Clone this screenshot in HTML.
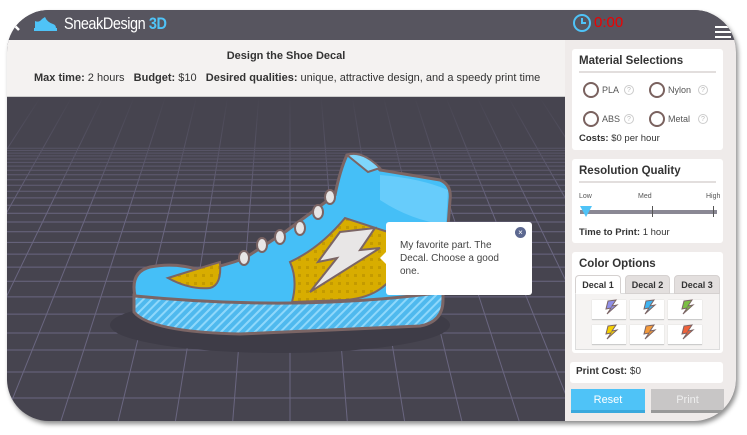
<!DOCTYPE html>
<html><head><meta charset="utf-8"><style>
*{box-sizing:border-box;margin:0;padding:0}
body{width:747px;height:435px;background:#fff;font-family:"Liberation Sans",sans-serif;position:relative;overflow:hidden}
#frame{position:absolute;left:7px;top:10px;width:729px;height:411px;border-radius:42px;overflow:hidden;background:#46444f;box-shadow:2px 3px 5px rgba(0,0,0,.45)}
#hdr{position:absolute;left:0;top:0;width:729px;height:30px;background:#57555f}
#info{position:absolute;left:0;top:30px;width:558px;height:57px;background:#f4f2f1;border-bottom:1px solid #ccc;font-size:11px;color:#333;text-align:center}
#side{position:absolute;left:558px;top:30px;width:171px;height:381px;background:#efebea}
.card{position:absolute;left:7px;width:151px;background:#fff;border-radius:3px}
.ttl{font-weight:bold;font-size:11.5px;color:#333;margin:6px 7px 0;padding-bottom:4px;border-bottom:2px solid #e2dedd}
.rad{position:absolute;width:16px;height:16px;border:2px solid #7a625f;border-radius:50%}
.lbl{position:absolute;font-size:9px;color:#555}
.q{position:absolute;width:10px;height:10px;border:1px solid #ccc;border-radius:50%;font-size:7px;color:#bbb;text-align:center;line-height:9px}
.sw{position:absolute;width:34px;height:20px;background:#fff;border-bottom:1px solid #ccc;box-shadow:0 0 1px #ccc}
.tab{position:absolute;top:23px;height:19px;font-size:9px;font-weight:bold;color:#333;text-align:center;line-height:18px;border-radius:4px 4px 0 0;background:#e3dfde;border:1px solid #d5d1d0}
</style></head><body>
<div id="frame">
<svg style="position:absolute;left:0;top:87px" width="558" height="324" viewBox="0 87 558 324">
<defs><linearGradient id="fd" x1="0" y1="0" x2="0" y2="1"><stop offset="0" stop-color="#46444f"/><stop offset=".35" stop-color="#46444f" stop-opacity="0"/></linearGradient></defs>
<g stroke="#6a6680" stroke-width="1" fill="none" id="grid"></g>
<rect x="0" y="87" width="558" height="324" fill="url(#fd)"/>
</svg>
<div id="hdr">
<svg style="position:absolute;left:3px;top:7px" width="12" height="14"><path d="M9 1 L3 7 L9 13" stroke="#fff" stroke-width="2.5" fill="none"/></svg>
<svg style="position:absolute;left:26px;top:6px" width="24" height="16"><path d="M2 12 L2 5 Q6 7 9 3 L12 1 Q14 6 20 8 Q23 9 23 12 Z" fill="#4fc3f7"/><rect x="1" y="12" width="23" height="3" fill="#4fc3f7"/></svg>
<div style="position:absolute;left:57px;top:4px;font-size:17px;color:#fff;letter-spacing:-.5px;transform:scaleX(.85);transform-origin:left">SneakDesign <b style="color:#4fc3f7">3D</b></div>
</div>
<div id="info">
<div style="font-weight:bold;margin-top:10px">Design the Shoe Decal</div>
<div style="margin-top:10px;text-align:left;padding-left:27px;white-space:nowrap"><b>Max time:</b> 2 hours &nbsp;&nbsp;<b>Budget:</b> $10 &nbsp;&nbsp;<b>Desired qualities:</b> unique, attractive design, and a speedy print time</div>
</div>
<!-- shoe in frame coords (page - 7,10) -->
<svg style="position:absolute;left:0;top:0" width="558" height="411" viewBox="7 10 558 411">
<defs><pattern id="st" width="6" height="6" patternUnits="userSpaceOnUse" patternTransform="rotate(45)"><rect width="6" height="6" fill="#4fb9ee"/><rect width="2" height="6" fill="#8fd8fb"/></pattern>
<pattern id="dt" width="8" height="8" patternUnits="userSpaceOnUse"><rect width="8" height="8" fill="#d8ad00"/><rect x="2" y="2" width="3" height="3" fill="#c39a00"/></pattern></defs>
<ellipse cx="280" cy="325" rx="170" ry="28" fill="#3e3c47"/>
<path d="M134 295 L134 312 Q150 332 240 334 L420 326 Q443 322 443 300 L443 292 Z" fill="url(#st)" stroke="#7b6565" stroke-width="3"/>
<path d="M135 296 Q130 272 150 267 Q175 262 200 270 Q225 266 245 258 L285 232 L335 195 Q340 170 347 155 Q362 150 380 170 L440 180 Q452 185 450 200 L447 240 L444 292 Q300 312 135 296 Z" fill="#45bff7" stroke="#7b6565" stroke-width="3"/>
<path d="M347 155 Q362 150 380 168 L368 172 Z" fill="#7fd6fb" stroke="#7b6565" stroke-width="2"/>
<path d="M380 175 Q420 178 448 190 L446 225 Q410 220 380 200 Z" fill="#6fd0fb" opacity=".8"/>
<path d="M168 278 Q200 268 220 262 Q222 285 210 288 Q190 290 168 278 Z" fill="url(#dt)" stroke="#7b6565" stroke-width="2"/>
<path d="M290 262 Q320 248 345 218 L388 232 L390 280 Q375 298 345 300 L292 302 Q298 280 290 262 Z" fill="url(#dt)" stroke="#7b6565" stroke-width="2"/>
<path d="M340 232 L375 228 L360 250 L380 248 L310 292 L337 258 L318 262 Z" fill="#e8e6e6" stroke="#7b6565" stroke-width="2"/>
<g fill="#e8e6e6" stroke="#7b6565" stroke-width="2"><ellipse cx="244" cy="258" rx="5" ry="7"/><ellipse cx="262" cy="245" rx="5" ry="7"/><ellipse cx="280" cy="237" rx="5" ry="7"/><ellipse cx="300" cy="228" rx="5" ry="7"/><ellipse cx="318" cy="212" rx="5" ry="7"/><ellipse cx="330" cy="197" rx="5" ry="7"/></g>
</svg>
<div style="position:absolute;left:379px;top:212px;width:146px;height:73px;background:#fff;border-radius:3px;font-size:10px;color:#444;padding:17px 14px 0 14px;line-height:13px">My favorite part. The Decal. Choose a good one.
<div style="position:absolute;left:-6px;top:30px;width:0;height:0;border-top:6px solid transparent;border-bottom:6px solid transparent;border-right:6px solid #fff"></div>
<div style="position:absolute;right:6px;top:5px;width:11px;height:11px;border-radius:50%;background:#5c6890;color:#fff;font-size:8px;line-height:11px;text-align:center">×</div></div>
<div id="side">
<svg style="position:absolute;left:7px;top:-27px" width="20" height="20"><circle cx="10" cy="10" r="8" stroke="#4fc3f7" stroke-width="2" fill="none"/><path d="M10 5 V10 H14" stroke="#4fc3f7" stroke-width="2" fill="none"/></svg>
<div style="position:absolute;left:29px;top:-26px;font-size:15px;color:#e00">0:00</div>
<div style="position:absolute;left:150px;top:-14px;width:16px;height:12px;border-top:2px solid #fff;border-bottom:2px solid #fff"><div style="margin-top:3px;height:2px;background:#fff"></div></div>
<div class="card" style="top:9px;height:101px"><div class="ttl">Material Selections</div>
<div class="rad" style="left:11px;top:33px"></div><div class="lbl" style="left:30px;top:36px">PLA</div><div class="q" style="left:52px;top:36px">?</div>
<div class="rad" style="left:77px;top:33px"></div><div class="lbl" style="left:96px;top:36px">Nylon</div><div class="q" style="left:126px;top:36px">?</div>
<div class="rad" style="left:11px;top:62px"></div><div class="lbl" style="left:30px;top:65px">ABS</div><div class="q" style="left:52px;top:65px">?</div>
<div class="rad" style="left:77px;top:62px"></div><div class="lbl" style="left:96px;top:65px">Metal</div><div class="q" style="left:126px;top:65px">?</div>
<div style="position:absolute;left:7px;top:84px;font-size:9.5px;color:#333"><b>Costs:</b> $0 per hour</div></div>
<div class="card" style="top:119px;height:84px"><div class="ttl">Resolution Quality</div>
<div class="lbl" style="left:7px;top:34px;font-size:7px">Low</div><div class="lbl" style="left:66px;top:34px;font-size:7px">Med</div><div class="lbl" style="left:134px;top:34px;font-size:7px">High</div>
<div style="position:absolute;left:8px;top:51px;width:137px;height:4px;background:#8a8894"></div>
<div style="position:absolute;left:80px;top:47px;width:1px;height:11px;background:#555"></div><div style="position:absolute;left:141px;top:47px;width:1px;height:11px;background:#555"></div>
<div style="position:absolute;left:8px;top:47px;width:0;height:0;border-left:6px solid transparent;border-right:6px solid transparent;border-top:11px solid #4fc3f7"></div>
<div style="position:absolute;left:7px;top:68px;font-size:9.5px;color:#333"><b>Time to Print:</b> 1 hour</div></div>
<div class="card" style="top:212px;height:101px"><div class="ttl" style="border:0">Color Options</div>
<div style="position:absolute;left:3px;top:41px;width:145px;height:57px;border:1px solid #ddd;background:#f5f3f2"></div>
<div class="tab" style="left:3px;width:46px;background:#fff;border-bottom-color:#fff">Decal 1</div>
<div class="tab" style="left:53px;width:45px">Decal 2</div><div class="tab" style="left:102px;width:46px">Decal 3</div>
<div class="sw" style="left:20px;top:48px"></div><div class="sw" style="left:58px;top:48px"></div><div class="sw" style="left:96px;top:48px"></div>
<div class="sw" style="left:20px;top:73px"></div><div class="sw" style="left:58px;top:73px"></div><div class="sw" style="left:96px;top:73px"></div>
<svg style="position:absolute;left:4px;top:-5px" width="151" height="101"><g stroke="#7b6565" stroke-width="1">
<path d="M32 54 L40 53 L36 59 L41 58 L31 67 L35 61 L30 62 Z" fill="#8f8fe8"/><path d="M70 54 L78 53 L74 59 L79 58 L69 67 L73 61 L68 62 Z" fill="#3fb4f2"/><path d="M108 54 L116 53 L112 59 L117 58 L107 67 L111 61 L106 62 Z" fill="#7bc043"/>
<path d="M32 79 L40 78 L36 84 L41 83 L31 92 L35 86 L30 87 Z" fill="#f5d000"/><path d="M70 79 L78 78 L74 84 L79 83 L69 92 L73 86 L68 87 Z" fill="#f59b3a"/><path d="M108 79 L116 78 L112 84 L117 83 L107 92 L111 86 L106 87 Z" fill="#f0623a"/></g></svg></div>
<div class="card" style="top:322px;left:5px;width:153px;height:21px;font-size:10px;color:#333;padding:4px 6px"><b>Print Cost:</b> $0</div>
<div style="position:absolute;left:6px;top:349px;width:74px;height:24px;background:#4fc3f7;border-bottom:3px solid #3aa9dd;color:#fff;font-size:11px;text-align:center;line-height:22px">Reset</div>
<div style="position:absolute;left:86px;top:349px;width:73px;height:24px;background:#c8c6c6;border-bottom:3px solid #999;color:#eee;font-size:11px;text-align:center;line-height:22px">Print</div>
</div>
</div>
<script>
var g=document.getElementById('grid'),s='';
var vx=283,vy=-300;
for(var k=-12;k<=12;k++){var bx=vx+k*58;s+='<line x1="'+vx+'" y1="'+vy+'" x2="'+bx+'" y2="420"/>';}
var d=208;for(var i=0;i<24;i++){var y=125+d;s+='<line x1="0" y1="'+(y-10)+'" x2="558" y2="'+(y-10)+'"/>';d/=1.1;}
[273,247,225].forEach(function(d){s+='<line x1="0" y1="'+(115+d)+'" x2="558" y2="'+(115+d)+'"/>';});
g.innerHTML=s;
</script>
</body></html>
